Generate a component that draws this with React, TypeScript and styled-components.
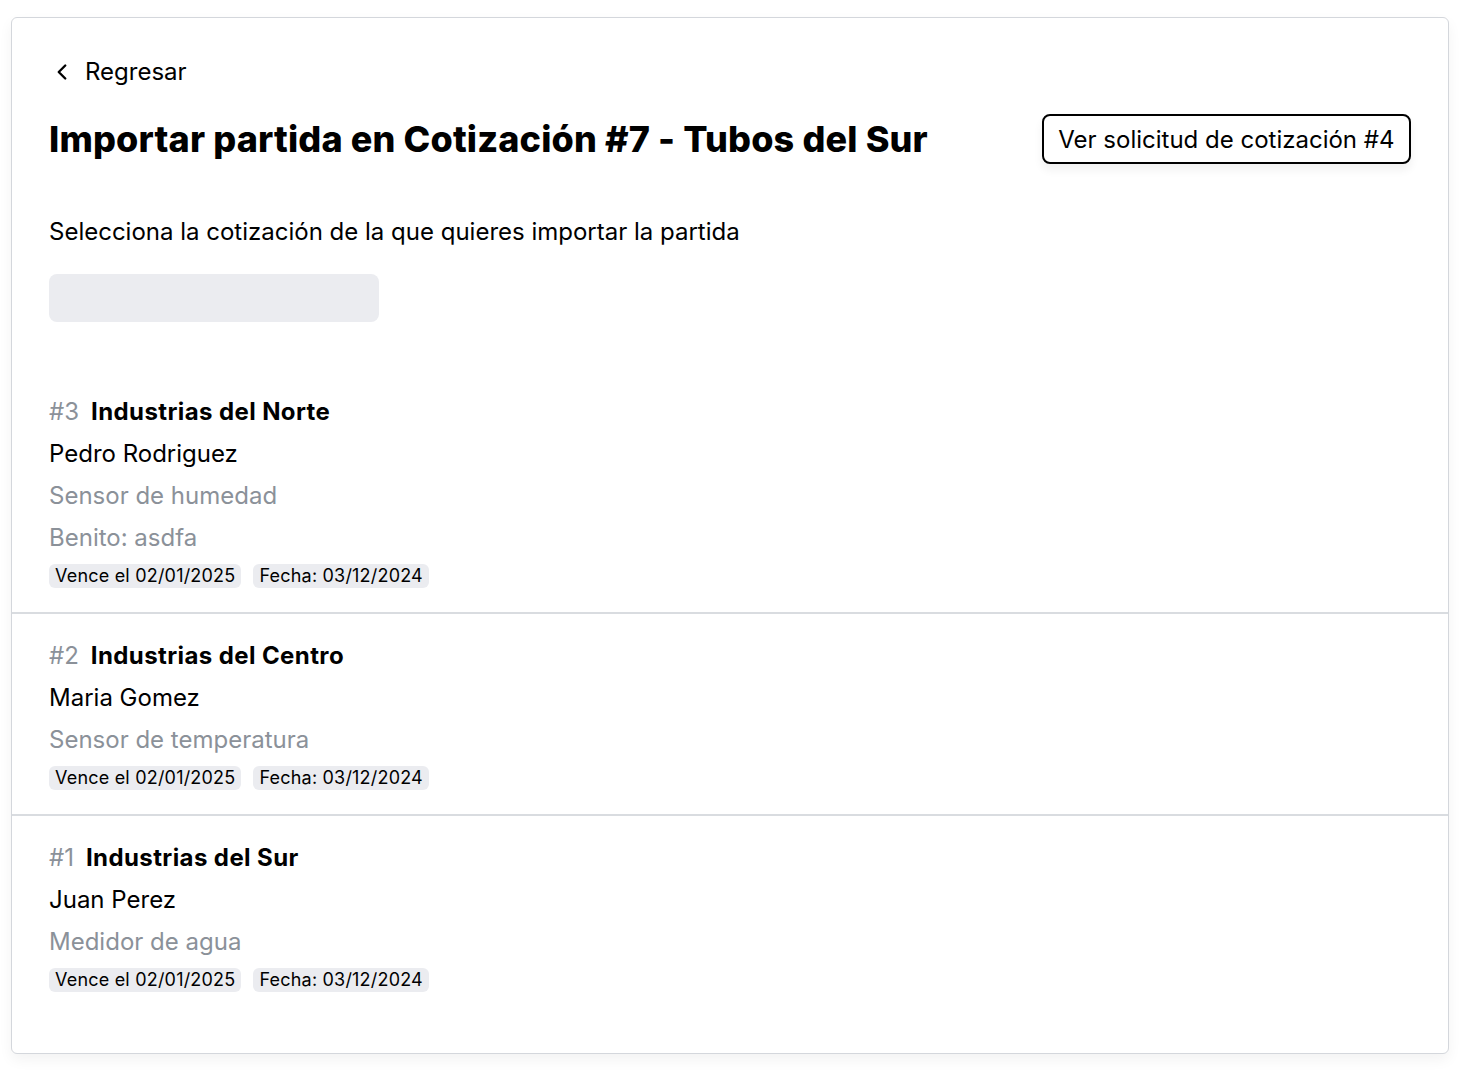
import React from "react";
import styled, { createGlobalStyle } from "styled-components";
import { ChevronLeft } from "lucide-react";

const Global = createGlobalStyle`
  html, body { margin: 0; padding: 0; background: #ffffff; }
  body { font-family: Inter, "Noto Sans", "Liberation Sans", sans-serif; color: #000; }
  * { box-sizing: border-box; }
`;

const Page = styled.div`
  padding: 17px 19px 24px 11px;
`;

const Card = styled.div`
  border: 1px solid #d4d7dc;
  border-radius: 6px;
  box-shadow: 0 6px 14px rgba(0, 0, 0, 0.05);
  padding: 36px 0 37px;
  background: #fff;
`;

const Header = styled.div`
  padding: 0 37px;
  display: flex;
  flex-direction: column;
`;

const BackLink = styled.a`
  display: flex;
  align-items: center;
  gap: 10px;
  font-size: 24px;
  line-height: 36px;
  color: #000;
  text-decoration: none;
  cursor: pointer;
  svg { flex: none; }
`;

const TitleRow = styled.div`
  margin-top: 24px;
  display: flex;
  align-items: center;
  justify-content: space-between;
`;

const Title = styled.h1`
  margin: 0;
  font-size: 36px;
  line-height: 50px;
  font-weight: 800;
  letter-spacing: 0.15px;
`;

const OutlineButton = styled.button`
  height: 50px;
  padding: 0 14.5px;
  border: 2px solid #000;
  border-radius: 8px;
  background: #fff;
  font-family: inherit;
  font-size: 24px;
  color: #000;
  box-shadow: 0 6px 10px rgba(0, 0, 0, 0.06);
  cursor: pointer;
`;

const Prompt = styled.p`
  margin: 50px 0 0;
  font-size: 24px;
  line-height: 36px;
`;

const Skeleton = styled.div`
  margin-top: 24px;
  width: 330px;
  height: 48px;
  border-radius: 8px;
  background: #ebecf0;
`;

const List = styled.div`
  margin-top: 48px;
  display: flex;
  flex-direction: column;
`;

const Item = styled.div<{ $last?: boolean }>`
  padding: 24px 37px 24px;
  display: flex;
  flex-direction: column;
  gap: 6px;
  border-bottom: ${(p) => (p.$last ? "none" : "2px solid #d9dce0")};
`;

const Line = styled.div<{ $muted?: boolean }>`
  font-size: 24px;
  line-height: 36px;
  color: ${(p) => (p.$muted ? "#8b9199" : "#000")};
`;

const Number = styled.span`
  color: #8b9199;
  margin-right: 12px;
`;

const Company = styled.span`
  font-weight: 700;
  letter-spacing: 0.4px;
`;

const Badges = styled.div`
  display: flex;
  gap: 12px;
  margin-top: 2px;
`;

const Badge = styled.span`
  background: #ebecf0;
  border-radius: 6px;
  padding: 0 6px;
  font-size: 18px;
  letter-spacing: 0.2px;
  line-height: 24px;
  color: #000;
`;

type Quote = {
  id: number;
  company: string;
  contact: string;
  details: string[];
};

const quotes: Quote[] = [
  { id: 3, company: "Industrias del Norte", contact: "Pedro Rodriguez", details: ["Sensor de humedad", "Benito: asdfa"] },
  { id: 2, company: "Industrias del Centro", contact: "Maria Gomez", details: ["Sensor de temperatura"] },
  { id: 1, company: "Industrias del Sur", contact: "Juan Perez", details: ["Medidor de agua"] },
];

export default function App() {
  return (
    <Page>
      <Global />
      <Card>
        <Header>
          <BackLink>
            <ChevronLeft size={26} strokeWidth={2.2} />
            Regresar
          </BackLink>
          <TitleRow>
            <Title>Importar partida en Cotización #7 - Tubos del Sur</Title>
            <OutlineButton>Ver solicitud de cotización #4</OutlineButton>
          </TitleRow>
          <Prompt>Selecciona la cotización de la que quieres importar la partida</Prompt>
          <Skeleton />
        </Header>
        <List>
          {quotes.map((q, i) => (
            <Item key={q.id} $last={i === quotes.length - 1}>
              <Line>
                <Number>#{q.id}</Number>
                <Company>{q.company}</Company>
              </Line>
              <Line>{q.contact}</Line>
              {q.details.map((d) => (
                <Line key={d} $muted>
                  {d}
                </Line>
              ))}
              <Badges>
                <Badge>Vence el 02/01/2025</Badge>
                <Badge>Fecha: 03/12/2024</Badge>
              </Badges>
            </Item>
          ))}
        </List>
      </Card>
    </Page>
  );
}
